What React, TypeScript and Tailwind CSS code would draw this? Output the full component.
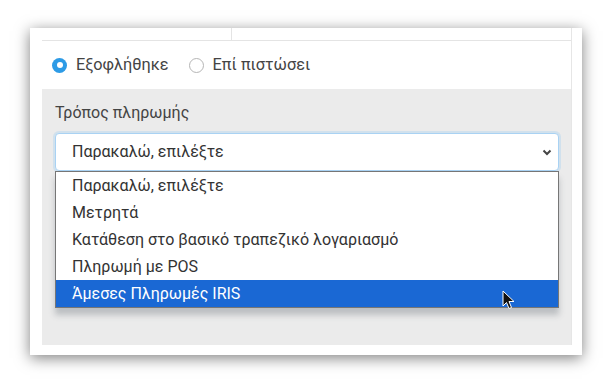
import React from "react";

const options = [
  "Παρακαλώ, επιλέξτε",
  "Μετρητά",
  "Κατάθεση στο βασικό τραπεζικό λογαριασμό",
  "Πληρωμή με POS",
  "Άμεσες Πληρωμές IRIS",
];

export default function App() {
  return (
    <div
      className="w-[612px] h-[389px] bg-white overflow-hidden pt-[28px] pl-[30px]"
      style={{ fontFamily: "Roboto, 'Noto Sans', sans-serif" }}
    >
      {/* Window card */}
      <div className="w-[552px] h-[327px] bg-white shadow-[0_3px_14px_rgba(0,0,0,0.5)] pl-[12px] pr-[10px] pb-[10px] flex flex-col">
        <div className="flex-1 flex flex-col border-r border-[#e6e6e6]">
          {/* Top strip */}
          <div className="h-[13px] flex border-b border-[#e4e4e4]">
            <div className="w-[190px] border-r border-[#e4e4e4]" />
            <div className="flex-1" />
          </div>

          {/* Radio row */}
          <div className="h-[48px] flex items-center pl-[10px] text-[16.3px] text-[#444]">
            <span className="w-[15px] h-[15px] rounded-full bg-[#2d9be6] flex items-center justify-center">
              <span className="w-[6px] h-[6px] rounded-full bg-white" />
            </span>
            <span className="ml-[9px]">Εξοφλήθηκε</span>
            <span className="ml-[20px] w-[15px] h-[15px] rounded-full border border-[#b5b5b5] bg-white" />
            <span className="ml-[9px]">Επί πιστώσει</span>
          </div>

          {/* Payment method section */}
          <div className="flex-1 bg-[#ebebeb] pt-[14px] pl-[13px] pr-[12px]">
            <div className="text-[16px] leading-[20px] text-[#444]">Τρόπος πληρωμής</div>
            <div className="relative mt-[10px]">
              <div className="h-[38px] bg-white border border-[#a9d2f3] rounded-[4px] shadow-[0_0_0_2px_rgba(160,205,240,0.35)] flex items-center justify-between pl-[16px] pr-[6px] text-[16px] text-[#333]">
                <span>Παρακαλώ, επιλέξτε</span>
                <svg width="10" height="7" viewBox="0 0 10 7" fill="none">
                  <path d="M1.5 1.5 L5 5 L8.5 1.5" stroke="#444" strokeWidth="2" />
                </svg>
              </div>
              {/* Open dropdown list */}
              <div className="absolute left-0 right-0 top-[38px] bg-white border border-[#767676] shadow-[0_7px_6px_rgba(80,90,100,0.3)]">
                {options.map((o, i) => (
                  <div
                    key={o}
                    className={
                      i === options.length - 1
                        ? "h-[27px] flex items-center pl-[16px] text-[16px] bg-[#1a68d4] text-white"
                        : "h-[27px] flex items-center pl-[16px] text-[16px] text-[#333]"
                    }
                  >
                    {o}
                  </div>
                ))}
                {/* Mouse cursor */}
                <svg
                  className="absolute left-[446px] top-[118px]"
                  width="13"
                  height="20"
                  viewBox="0 0 13 20"
                >
                  <path
                    d="M1 1 L1 16 L4.5 12.5 L7 18.5 L9.5 17.5 L7 11.5 L12 11.5 Z"
                    fill="#111"
                    stroke="#fff"
                    strokeWidth="1"
                    strokeLinejoin="round"
                  />
                </svg>
              </div>
            </div>
          </div>
        </div>
      </div>
    </div>
  );
}
